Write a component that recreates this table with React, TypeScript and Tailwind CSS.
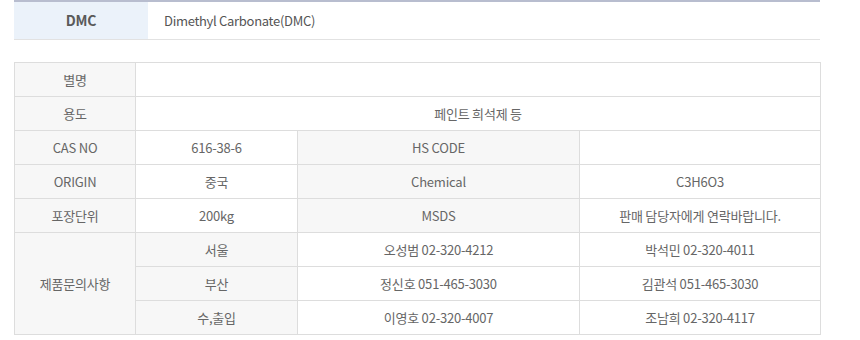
import React from "react";

const th = "bg-[#f7f7f7] border border-[#dddddd] text-center font-normal";
const td = "bg-white border border-[#dddddd] text-center";

export default function App() {
  return (
    <div
      className="w-[860px] h-[340px] bg-white text-[13px] text-[#666666] tracking-[-0.2px]"
      style={{ fontFamily: '"Noto Sans CJK KR", "Noto Sans", sans-serif' }}
    >
      <div className="pl-[14px] w-[820px]">
        <div className="flex border-t-2 border-[#b8bdcf] border-b border-b-[#e2e2e2] h-[40px]">
          <div className="w-[134px] bg-[#ebf2fa] flex items-center justify-center text-[14px] font-bold text-[#5a5a5a]">
            DMC
          </div>
          <div className="flex-1 flex items-center pl-[16px] text-[#555555] tracking-[-0.3px]">
            Dimethyl Carbonate(DMC)
          </div>
        </div>

        <table className="mt-[22px] w-[806px] border-collapse table-fixed">
          <colgroup>
            <col className="w-[121px]" />
            <col className="w-[162px]" />
            <col className="w-[282px]" />
            <col className="w-[241px]" />
          </colgroup>
          <tbody>
            <tr className="h-[34px]">
              <th className={th}>별명</th>
              <td className={td} colSpan={3}></td>
            </tr>
            <tr className="h-[34px]">
              <th className={th}>용도</th>
              <td className={td} colSpan={3}>페인트 희석제 등</td>
            </tr>
            <tr className="h-[34px]">
              <th className={th}>CAS NO</th>
              <td className={td}>616-38-6</td>
              <th className={th}>HS CODE</th>
              <td className={td}></td>
            </tr>
            <tr className="h-[34px]">
              <th className={th}>ORIGIN</th>
              <td className={td}>중국</td>
              <th className={th}>Chemical</th>
              <td className={td}>C3H6O3</td>
            </tr>
            <tr className="h-[34px]">
              <th className={th}>포장단위</th>
              <td className={td}>200kg</td>
              <th className={th}>MSDS</th>
              <td className={td}>판매 담당자에게 연락바랍니다.</td>
            </tr>
            <tr className="h-[34px]">
              <th className={th} rowSpan={3}>제품문의사항</th>
              <th className={th}>서울</th>
              <td className={td}>오성범 02-320-4212</td>
              <td className={td}>박석민 02-320-4011</td>
            </tr>
            <tr className="h-[34px]">
              <th className={th}>부산</th>
              <td className={td}>정신호 051-465-3030</td>
              <td className={td}>김관석 051-465-3030</td>
            </tr>
            <tr className="h-[34px]">
              <th className={th}>수,출입</th>
              <td className={td}>이영호 02-320-4007</td>
              <td className={td}>조남희 02-320-4117</td>
            </tr>
          </tbody>
        </table>
      </div>
    </div>
  );
}
